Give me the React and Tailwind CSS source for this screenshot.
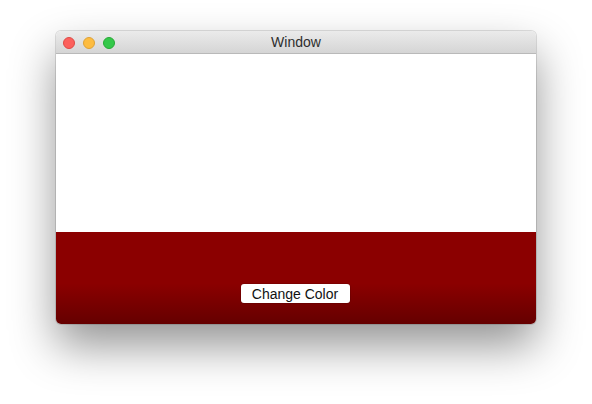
export default function App() {
  return (
    <div
      className="w-[592px] h-[404px] bg-white pl-[56px] pt-[31px]"
      style={{ fontFamily: '"Liberation Sans", Arial, sans-serif' }}
    >
      <div className="w-[480px] h-[293px] rounded-[5px] overflow-hidden flex flex-col shadow-[0_22px_45px_rgba(0,0,0,0.42),0_0_0_1px_rgba(0,0,0,0.12)]">
        <div className="h-[23px] shrink-0 relative flex items-center pt-[1px] bg-gradient-to-b from-[#ebebeb] to-[#d5d5d5] border-b border-[#b9b9b9]">
          <div className="flex gap-[8px] pl-[7px]">
            <span className="w-[12px] h-[12px] rounded-full bg-[#fc605c] border border-[#de4a45]" />
            <span className="w-[12px] h-[12px] rounded-full bg-[#fdbc40] border border-[#dea236]" />
            <span className="w-[12px] h-[12px] rounded-full bg-[#34c84a] border border-[#27aa35]" />
          </div>
          <span className="absolute inset-0 flex items-center justify-center text-[14px] text-[#2e2e2e]">
            Window
          </span>
        </div>
        <div className="h-[178px] shrink-0 bg-white" />
        <div className="flex-1 flex flex-col items-center justify-end pb-[21px] bg-[linear-gradient(to_bottom,#8b0000_0%,#8b0000_56%,#650000_100%)]">
          <button className="w-[109px] h-[19px] -ml-[2px] rounded-[3px] bg-white text-[14px] leading-none text-[#111] shadow-[0_0_0_0.5px_rgba(0,0,0,0.2)]">
            Change Color
          </button>
        </div>
      </div>
    </div>
  );
}
